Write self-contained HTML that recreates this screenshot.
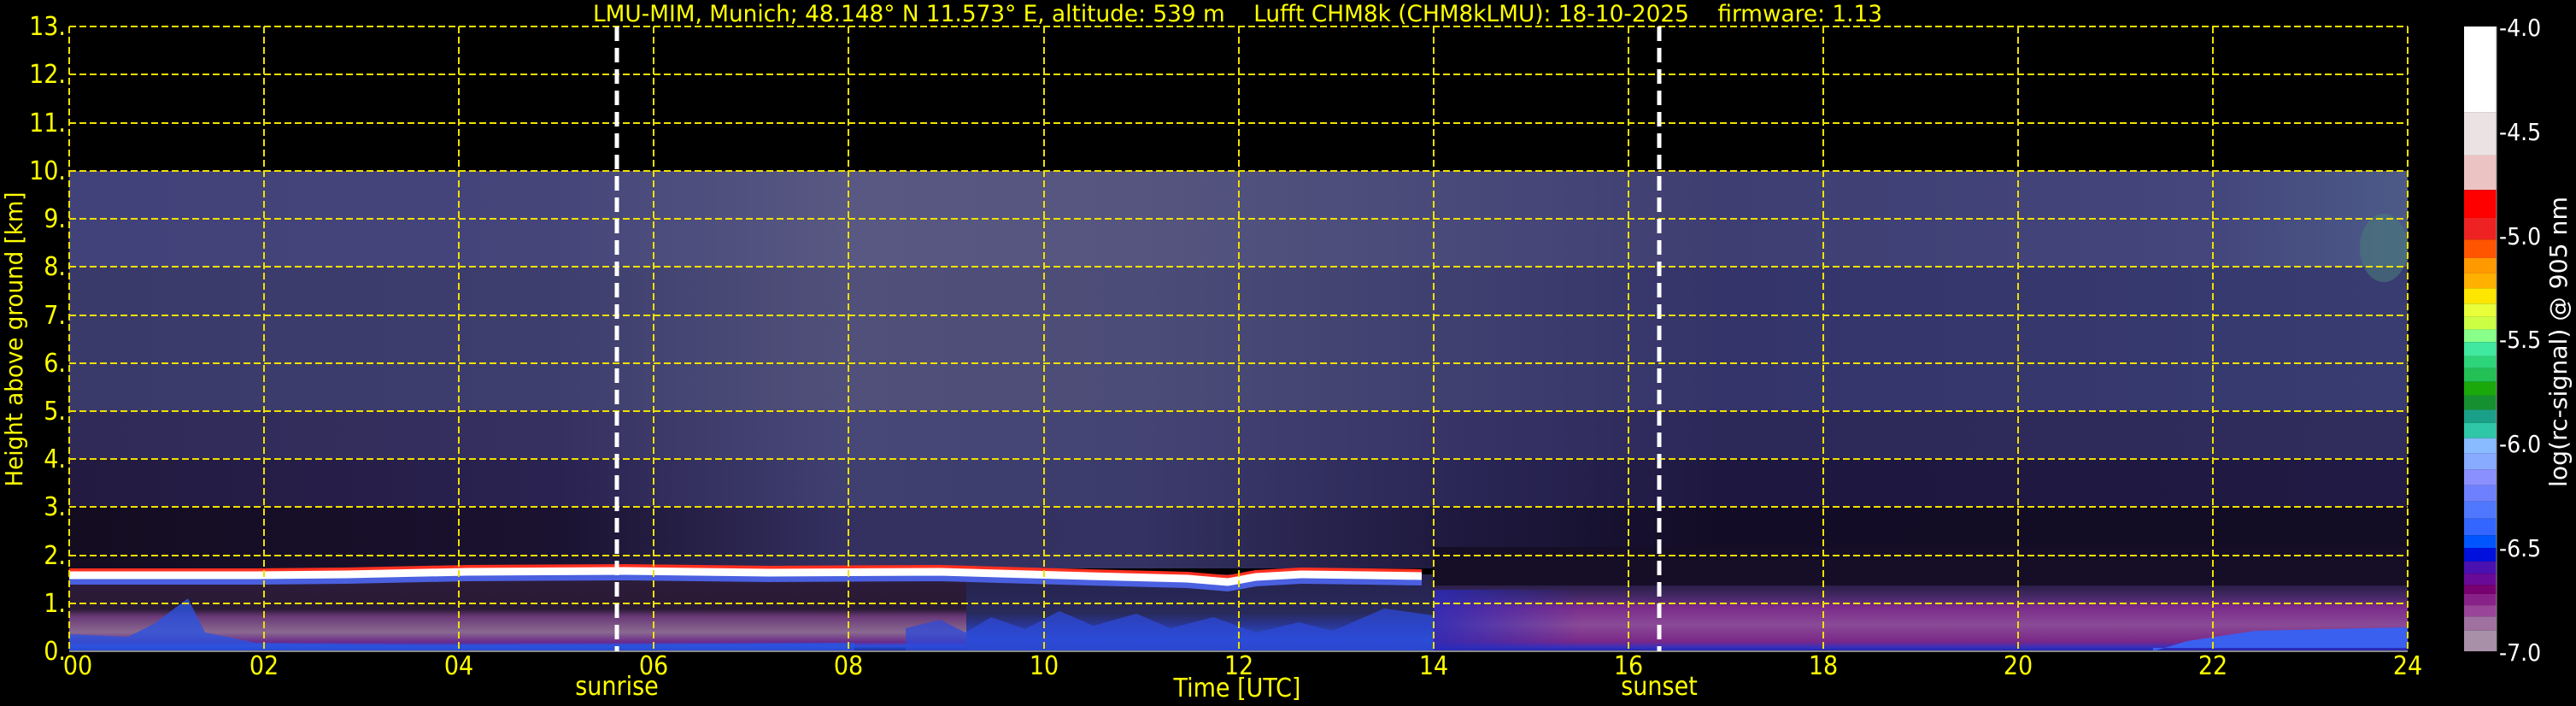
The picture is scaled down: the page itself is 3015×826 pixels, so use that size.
<!DOCTYPE html>
<html><head><meta charset="utf-8"><style>
html,body{margin:0;padding:0;background:#000;}
svg{display:block;}
text{font-family:"DejaVu Sans Condensed","DejaVu Sans","Liberation Sans",sans-serif;}
</style></head><body>
<svg width="3015" height="826" viewBox="0 0 3015 826" xmlns="http://www.w3.org/2000/svg">
<defs>
<linearGradient id="b1" x1="81" x2="2818" gradientUnits="userSpaceOnUse">
<stop offset="0" stop-color="#42427a"/><stop offset=".208" stop-color="#45457a"/><stop offset=".333" stop-color="#585882"/><stop offset=".458" stop-color="#55557f"/><stop offset=".583" stop-color="#4a4a7a"/><stop offset=".708" stop-color="#3e3e72"/><stop offset=".917" stop-color="#44467c"/><stop offset="1" stop-color="#4c5a88"/></linearGradient>
<linearGradient id="b2" x1="81" x2="2818" gradientUnits="userSpaceOnUse">
<stop offset="0" stop-color="#3a3a6a"/><stop offset=".208" stop-color="#3e3e6e"/><stop offset=".333" stop-color="#50507a"/><stop offset=".458" stop-color="#4c4c78"/><stop offset=".583" stop-color="#404070"/><stop offset=".708" stop-color="#34346a"/><stop offset="1" stop-color="#383c70"/></linearGradient>
<linearGradient id="b3" x1="81" x2="2818" gradientUnits="userSpaceOnUse">
<stop offset="0" stop-color="#302a58"/><stop offset=".208" stop-color="#363060"/><stop offset=".333" stop-color="#484878"/><stop offset=".458" stop-color="#444474"/><stop offset=".583" stop-color="#383468"/><stop offset=".708" stop-color="#2c2858"/><stop offset="1" stop-color="#302c5c"/></linearGradient>
<linearGradient id="b4" x1="81" x2="2818" gradientUnits="userSpaceOnUse">
<stop offset="0" stop-color="#221a40"/><stop offset=".208" stop-color="#2a2250"/><stop offset=".333" stop-color="#404070"/><stop offset=".458" stop-color="#3c3c6c"/><stop offset=".583" stop-color="#2c2858"/><stop offset=".708" stop-color="#1e1840"/><stop offset="1" stop-color="#201a44"/></linearGradient>
<linearGradient id="b5" x1="81" x2="2818" gradientUnits="userSpaceOnUse">
<stop offset="0" stop-color="#140c20"/><stop offset=".208" stop-color="#1a1230"/><stop offset=".333" stop-color="#343060"/><stop offset=".458" stop-color="#343262"/><stop offset=".583" stop-color="#201a40"/><stop offset=".708" stop-color="#120c26"/><stop offset="1" stop-color="#120c24"/></linearGradient>
<linearGradient id="low1" x1="0" y1="672" x2="0" y2="762" gradientUnits="userSpaceOnUse">
<stop offset="0" stop-color="#2c1c3c"/><stop offset=".45" stop-color="#2a1a34"/><stop offset=".55" stop-color="#6a3a78"/><stop offset=".75" stop-color="#8a6a90"/><stop offset=".88" stop-color="#6a2a8a"/><stop offset=".93" stop-color="#2a50e0"/><stop offset="1" stop-color="#1a2a90"/></linearGradient>
<linearGradient id="low2" x1="0" y1="672" x2="0" y2="762" gradientUnits="userSpaceOnUse">
<stop offset="0" stop-color="#26224c"/><stop offset=".5" stop-color="#282a5a"/><stop offset=".65" stop-color="#2a3590"/><stop offset=".85" stop-color="#2a50d0"/><stop offset="1" stop-color="#2040b0"/></linearGradient>
<linearGradient id="low3" x1="0" y1="685" x2="0" y2="762" gradientUnits="userSpaceOnUse">
<stop offset="0" stop-color="#2a1e48"/><stop offset=".2" stop-color="#4a2a6a"/><stop offset=".32" stop-color="#7a2a8a"/><stop offset=".6" stop-color="#8a4a96"/><stop offset=".85" stop-color="#7a2888"/><stop offset=".95" stop-color="#3030c0"/><stop offset="1" stop-color="#2020a0"/></linearGradient>
<linearGradient id="blueFade" x1="1678" x2="1850" gradientUnits="userSpaceOnUse"><stop offset="0" stop-color="#2a2ab8" stop-opacity=".85"/><stop offset="1" stop-color="#2a2ab8" stop-opacity="0"/></linearGradient>
</defs>

<rect x="81" y="200" width="2737" height="112" fill="url(#b1)"/>
<rect x="81" y="312" width="2737" height="169" fill="url(#b2)"/>
<rect x="81" y="481" width="2737" height="56" fill="url(#b3)"/>
<rect x="81" y="537" width="2737" height="56" fill="url(#b4)"/>
<rect x="81" y="593" width="2737" height="72" fill="url(#b5)"/>
<rect x="1678" y="640" width="1140" height="50" fill="#160e26"/>
<ellipse cx="2790" cy="290" rx="28" ry="40" fill="#4a7a7a" opacity=".6"/>

<rect x="81" y="672" width="1050" height="90" fill="url(#low1)"/>
<rect x="1131" y="672" width="547" height="90" fill="url(#low2)"/>
<path d="M1060 762 L1060 735 L1100 725 L1130 740 L1160 722 L1200 736 L1240 715 L1280 732 L1330 718 L1370 735 L1420 722 L1470 740 L1520 728 L1560 738 L1620 712 L1678 720 L1678 762Z" fill="#2e4ad8" opacity=".75"/>
<rect x="1678" y="685" width="1140" height="77" fill="url(#low3)"/>
<rect x="1678" y="690" width="172" height="72" fill="url(#blueFade)"/>
<path d="M2520 762 L2560 750 L2640 738 L2818 734 L2818 758 L2520 758Z" fill="#3a60f0"/>
<path d="M81 762 L81 742 L150 745 L180 730 L220 700 L240 740 L300 752 L500 755 L1000 752 L1000 762Z" fill="#2c52e0" opacity=".8"/>

<polyline fill="none" stroke="#4a60e0" stroke-width="14" points="81,677 300,677 406,676 547,673 732,672 900,674 1100,673 1274,678 1390,681 1437,685 1470,679 1523,676 1600,677 1664,678"/>
<polyline fill="none" stroke="#ff3020" stroke-width="10" points="81,670 300,670 406,669 547,666 732,665 900,667 1100,666 1274,671 1390,674 1437,678 1470,672 1523,669 1600,670 1664,671"/>
<polyline fill="none" stroke="#ffffff" stroke-width="9" points="81,673 300,673 406,672 547,669 732,668 900,670 1100,669 1274,674 1390,677 1437,681 1470,675 1523,672 1600,673 1664,674"/>

<g stroke="#f0e000" stroke-width="2" stroke-dasharray="8,4" fill="none">
<path d="M81 31H2818M81 87H2818M81 144H2818M81 200H2818M81 256H2818M81 312H2818M81 369H2818M81 425H2818M81 481H2818M81 537H2818M81 593H2818M81 650H2818M81 706H2818"/>
<path d="M81 31V762M309 31V762M537 31V762M765 31V762M993 31V762M1222 31V762M1450 31V762M1678 31V762M1906 31V762M2134 31V762M2362 31V762M2590 31V762M2818 31V762"/>
</g>
<line x1="81" y1="762" x2="2818" y2="762" stroke="#888" stroke-width="2"/>
<g stroke="#fff" stroke-width="5" stroke-dasharray="17,8">
<line x1="722" y1="31" x2="722" y2="762"/>
<line x1="1942" y1="31" x2="1942" y2="762"/>
</g>

<text x="694" y="25" font-size="27" fill="#ffff00" textLength="1509" lengthAdjust="spacingAndGlyphs" xml:space="preserve">LMU-MIM, Munich; 48.148° N 11.573° E, altitude: 539 m    Lufft CHM8k (CHM8kLMU): 18-10-2025    firmware: 1.13</text>

<g font-size="30" fill="#ffff00" text-anchor="end">
<text x="77" y="772">0.</text><text x="77" y="716">1.</text><text x="77" y="660">2.</text><text x="77" y="603">3.</text><text x="77" y="547">4.</text><text x="77" y="491">5.</text><text x="77" y="435">6.</text><text x="77" y="379">7.</text><text x="77" y="322">8.</text><text x="77" y="266">9.</text><text x="77" y="210">10.</text><text x="77" y="154">11.</text><text x="77" y="97">12.</text><text x="77" y="41">13.</text>
</g>
<text transform="translate(26,397) rotate(-90)" font-size="28" fill="#ffff00" text-anchor="middle" textLength="345" lengthAdjust="spacingAndGlyphs" style="font-family:'DejaVu Sans',sans-serif">Height above ground [km]</text>
<g font-size="30" fill="#ffff00" text-anchor="middle">
<text x="91" y="789">00</text><text x="309" y="789">02</text><text x="537" y="789">04</text><text x="765" y="789">06</text><text x="993" y="789">08</text><text x="1222" y="789">10</text><text x="1450" y="789">12</text><text x="1678" y="789">14</text><text x="1906" y="789">16</text><text x="2134" y="789">18</text><text x="2362" y="789">20</text><text x="2590" y="789">22</text><text x="2818" y="789">24</text>
<text x="1448" y="815">Time [UTC]</text>
<text x="722" y="813">sunrise</text>
<text x="1942" y="813">sunset</text>
</g>

<g transform="translate(2884,31) scale(1,0.52818) translate(0,-60)">
<rect y="60" height="190" width="38" fill="#ffffff"/>
<rect y="250" height="95" width="38" fill="#ebe3e3"/>
<rect y="345" height="77" width="38" fill="#ecc3c3"/>
<rect y="422" height="62" width="38" fill="#ff0000"/>
<rect y="484" height="48" width="38" fill="#ee2222"/>
<rect y="532" height="41" width="38" fill="#ff5500"/>
<rect y="573" height="34" width="38" fill="#ff9900"/>
<rect y="607" height="33" width="38" fill="#ffb000"/>
<rect y="640" height="34" width="38" fill="#ffe600"/>
<rect y="674" height="29" width="38" fill="#e8ff3a"/>
<rect y="703" height="28" width="38" fill="#ccff44"/>
<rect y="731" height="28" width="38" fill="#88ff88"/>
<rect y="759" height="31" width="38" fill="#40e8a0"/>
<rect y="790" height="27" width="38" fill="#2ed478"/>
<rect y="817" height="30" width="38" fill="#22c055"/>
<rect y="847" height="30" width="38" fill="#1aa80a"/>
<rect y="877" height="32" width="38" fill="#159030"/>
<rect y="909" height="29" width="38" fill="#1aa088"/>
<rect y="938" height="34" width="38" fill="#2ec8a8"/>
<rect y="972" height="34" width="38" fill="#88bbff"/>
<rect y="1006" height="35" width="38" fill="#88aaff"/>
<rect y="1041" height="35" width="38" fill="#8a90ff"/>
<rect y="1076" height="36" width="38" fill="#6f80ff"/>
<rect y="1112" height="38" width="38" fill="#4f78ff"/>
<rect y="1150" height="37" width="38" fill="#3366ff"/>
<rect y="1187" height="28" width="38" fill="#0055ff"/>
<rect y="1215" height="30" width="38" fill="#0011dd"/>
<rect y="1245" height="27" width="38" fill="#4a10b0"/>
<rect y="1272" height="25" width="38" fill="#6a0a98"/>
<rect y="1297" height="20" width="38" fill="#780070"/>
<rect y="1317" height="25" width="38" fill="#882288"/>
<rect y="1342" height="25" width="38" fill="#994499"/>
<rect y="1367" height="31" width="38" fill="#a070a0"/>
<rect y="1398" height="46" width="38" fill="#a890a8"/>
</g>
<line x1="2922" y1="31" x2="2922" y2="762" stroke="#888" stroke-width="1"/>
<g font-size="28" fill="#ffffff" style="font-family:'DejaVu Sans',sans-serif">
<text x="2925" y="42">-4.0</text><text x="2925" y="164">-4.5</text><text x="2925" y="286">-5.0</text><text x="2925" y="407">-5.5</text><text x="2925" y="529">-6.0</text><text x="2925" y="651">-6.5</text><text x="2925" y="773">-7.0</text>
</g>
<text transform="translate(3004,400) rotate(-90)" font-size="28" fill="#ffffff" text-anchor="middle" textLength="340" lengthAdjust="spacingAndGlyphs">log(rc-signal) @ 905 nm</text>
</svg>
</body></html>
